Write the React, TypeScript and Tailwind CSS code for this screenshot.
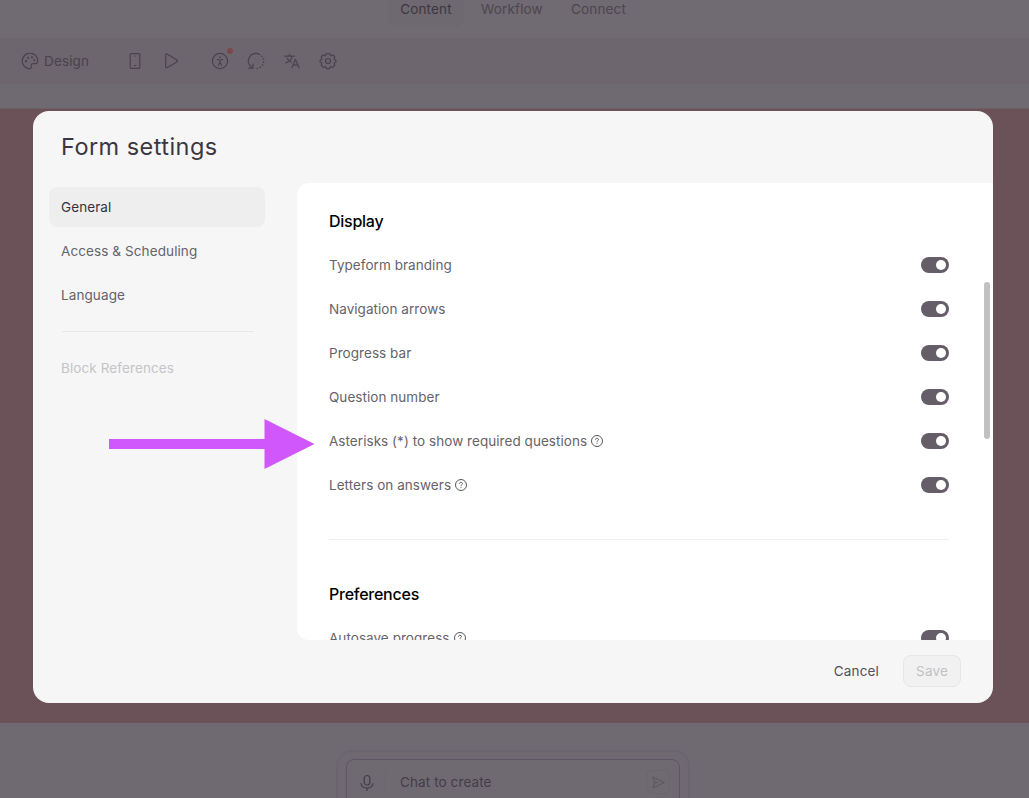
import { ReactNode } from "react";

const displayOptions = [
  { label: "Typeform branding" },
  { label: "Navigation arrows" },
  { label: "Progress bar" },
  { label: "Question number" },
  { label: "Asterisks (*) to show required questions", help: true },
  { label: "Letters on answers", help: true },
];

function Icon({ children, size = 18 }: { children: ReactNode; size?: number }) {
  return (
    <svg
      width={size}
      height={size}
      viewBox="0 0 18 18"
      fill="none"
      stroke="currentColor"
      strokeWidth="1.2"
      strokeLinecap="round"
      strokeLinejoin="round"
      className="shrink-0"
    >
      {children}
    </svg>
  );
}

function HelpIcon() {
  return (
    <svg
      width="12"
      height="12"
      viewBox="0 0 12 12"
      fill="none"
      stroke="#5a565c"
      className="shrink-0"
    >
      <circle cx="6" cy="6" r="5.5" strokeWidth="1" />
      <path
        d="M4.5 4.8C4.5 3.8 5.1 3.3 6 3.3s1.5.5 1.5 1.3c0 1-1.5 1-1.5 2.1"
        strokeWidth="1"
      />
      <path d="M6 7.8v1" strokeWidth="1" />
    </svg>
  );
}

function Toggle() {
  return (
    <div className="flex h-4 w-7 items-center justify-end rounded-full bg-[#655d67] pr-[3px]">
      <div className="h-2.5 w-2.5 rounded-full bg-white" />
    </div>
  );
}

function SettingRow({ label, help }: { label: string; help?: boolean }) {
  return (
    <div className="flex h-11 items-center justify-between">
      <div className="flex items-center gap-1">
        <span className="pb-px text-[13.5px] leading-5 tracking-[0.05px] text-[#66636a]">
          {label}
        </span>
        {help && <HelpIcon />}
      </div>
      <Toggle />
    </div>
  );
}

function Toolbar() {
  return (
    <div className="flex h-[46px] shrink-0 items-center bg-[#6d666e] pl-[21px] text-[#4a424d]">
      <div className="flex w-[105px] items-center gap-[5px]">
        <Icon>
          <path d="M9 1.2a7.8 7.8 0 0 0 0 15.6c.9 0 1.2-.6 1.2-1.3v-2c0-1.1.7-1.8 1.8-1.8h2.2c1.7 0 2.6-1.2 2.6-2.9C16.8 4.6 13.3 1.2 9 1.2Z" />
          <circle cx="5" cy="9.2" r=".5" fill="currentColor" />
          <circle cx="7" cy="5.8" r=".5" fill="currentColor" />
          <circle cx="11" cy="5.3" r=".5" fill="currentColor" />
          <circle cx="13.3" cy="8.1" r=".5" fill="currentColor" />
        </Icon>
        <span className="text-[13.5px] tracking-[0.15px]">Design</span>
      </div>
      <div className="flex items-center">
        <div className="w-9">
          <Icon>
            <rect x="4.2" y="1.6" width="9.6" height="14.8" rx="1" />
            <path d="M8.7 4h.6M8.2 13.5h1.6" />
          </Icon>
        </div>
        <div className="w-[49px]">
          <Icon>
            <path d="M3.7 2.8c0-.8.6-1.1 1.3-.8l10 6.1c.7.4.7 1.200 0 1.600l-10 6c-.7.4-1.3 0-1.3-.8Z" />
          </Icon>
        </div>
        <div className="relative w-9">
          <Icon>
            <circle cx="9" cy="9" r="7.6" />
            <circle cx="9" cy="5.2" r=".9" fill="currentColor" stroke="none" />
            <path
              d="M6.200 7.500 9 8l2.800-.5M9 8v2.200M9 10.200l-1.500 2.900M9 10.200l1.500 2.900"
              strokeWidth="1.1"
            />
          </Icon>
          <span className="absolute top-[-4px] left-[16px] h-1.5 w-1.5 rounded-full bg-[#7c484e]" />
        </div>
        <div className="w-9">
          <Icon>
            <path d="M12.7 2.4A7.6 7.6 0 0 0 5.2 15.7M1.8 16.2h4.2v-4" />
            <path
              d="M14.9 4.2A7.6 7.6 0 0 1 8 16.6"
              strokeDasharray=".2 2.9"
              strokeWidth="1.5"
            />
          </Icon>
        </div>
        <div className="w-9">
          <Icon>
            <path d="M2 4.2h9.3M6.4 2.4v1.8M9.3 4.2c-.7 3-3 5.400-6.500 6.700M4.2 6.300c.9 1.800 2.200 3 4.200 4M9 15.700l3.200-8h.4l3.400 8M10.100 13.200h4.700" />
          </Icon>
        </div>
        <Icon>
          <path d="M7.4 1.5h3.2l.6 1.7 1 .4 1.7-.7 1.9 1.900-.7 1.700.4 1 1.400.7v1.800l-1.400.7-.4 1 .7 1.700-1.900 1.900-1.700-.7-1 .4-.6 1.700H7.400l-.6-1.700-1-.4-1.700.7-1.900-1.900.7-1.700-.4-1-1.400-.7V8.200l1.400-.7.4-1-.7-1.700 1.900-1.900 1.700.7 1-.4Z" />
          <circle cx="9" cy="9" r="2.5" />
        </Icon>
      </div>
    </div>
  );
}

function EditorBackground() {
  return (
    <div className="flex h-full flex-col overflow-hidden bg-[#6f6a72]">
      <div className="flex h-[38px] shrink-0 bg-[#706a72] pl-[388px] text-[13.5px] leading-[18px] tracking-[0.15px] text-[#4c464f]">
        <div className="h-[27px] w-[76px] rounded-b-lg bg-[#6e6870] text-center text-[#3d3741]">
          Content
        </div>
        <span className="ml-[17px] w-[90px]">Workflow</span>
        <span>Connect</span>
      </div>
      <Toolbar />
      <div className="h-[25px] shrink-0 border-b border-[#6c5f66]" />
      <div className="h-[614px] shrink-0 bg-[#6b5258]" />
      <div className="flex flex-1 justify-center pt-[27px] pr-[3px]">
        <div className="h-16 w-[354px] shrink-0 rounded-2xl border-2 border-[#6b6570] px-[8px] pt-[7px]">
          <div className="flex h-16 items-start rounded-lg border border-[#5f5565] pt-[10px] pl-[11px] text-[#443d47]">
            <div className="mt-[4px]">
              <Icon>
                <rect x="6.2" y="1.5" width="5.6" height="9.5" rx="2.8" />
                <path d="M3 9.5c.5 3 2.7 4.5 6 4.500s5.500-1.500 6-4.500M9 14v2.500" />
              </Icon>
            </div>
            <div className="ml-[9px] h-6 w-px bg-[#6b656d]" />
            <span className="mt-[2px] ml-[14px] w-[246px] text-[13.5px] leading-5 tracking-[0.1px]">
              Chat to create
            </span>
            <div className="flex h-6 w-6 shrink-0 items-center justify-center rounded-md border border-[#6b656d] text-[#5b555e]">
              <Icon size={15}>
                <path d="M2.5 2.5 16 9 2.5 15.500 4.200 9ZM4.200 9H8" />
              </Icon>
            </div>
          </div>
        </div>
      </div>
    </div>
  );
}

function Sidebar() {
  return (
    <nav className="mt-1 ml-4 w-[216px] text-[13.5px] leading-5 tracking-[0.1px] text-[#66636a]">
      <div className="flex h-10 items-center rounded-lg bg-[#eeeeee] px-3 pb-px text-[#37323b]">
        General
      </div>
      <div className="mt-1 flex h-10 items-center px-3 pb-px">
        Access &amp; Scheduling
      </div>
      <div className="mt-1 flex h-10 items-center px-3 pb-px">Language</div>
      <div className="mr-[11px] ml-[13px] mt-4 h-px bg-[#e8e8e8]" />
      <div className="mt-4 flex h-10 items-center px-3 pb-px text-[#c5c4c6]">
        Block References
      </div>
    </nav>
  );
}

function SettingsDialog() {
  return (
    <div className="absolute top-[111px] left-[33px] flex h-[592px] w-[960px] flex-col overflow-hidden rounded-2xl bg-[#f6f6f6]">
      <h1 className="flex h-[72px] items-center pl-7 text-[23.5px] tracking-[0.45px] text-[#3b363f]">
        Form settings
      </h1>
      <div className="flex h-[457px] justify-between">
        <Sidebar />
        <div className="relative w-[696px] overflow-hidden rounded-l-xl bg-white pr-11 pl-8">
          <h2 className="mt-[26px] h-6 text-[16px] leading-6 font-medium tracking-[-0.25px] text-black">
            Display
          </h2>
          <div className="mt-[10px]">
            {displayOptions.map((option) => (
              <SettingRow
                key={option.label}
                label={option.label}
                help={option.help}
              />
            ))}
          </div>
          <div className="mt-8 h-px bg-[#f0f0f0]" />
          <h2 className="mt-[42px] h-6 text-[16px] leading-6 font-medium tracking-[-0.25px] text-black">
            Preferences
          </h2>
          <div className="mt-[10px]">
            <SettingRow label="Autosave progress" help />
          </div>
          <div className="absolute top-[99px] right-[3px] h-[157px] w-1.5 rounded-full bg-[#c1c1c1]" />
        </div>
      </div>
      <div className="flex flex-1 items-center justify-end gap-6 pr-8 pb-px text-[13.5px] leading-5 tracking-[0.15px]">
        <button className="text-[#554f59]">Cancel</button>
        <button className="h-8 w-[58px] rounded-lg border border-[#e6e6e6] bg-[#f1f1f1] text-[#c2c1c3]">
          Save
        </button>
      </div>
    </div>
  );
}

export default function App() {
  return (
    <div className="relative h-[798px] w-[1029px] overflow-hidden font-['Inter',sans-serif]">
      <EditorBackground />
      <SettingsDialog />
      <svg
        width="206"
        height="50"
        viewBox="0 0 206 50"
        className="absolute top-[419px] left-[109px]"
      >
        <path d="M0 20h155.5V0L205.500 25 155.500 50V30H0Z" fill="#d057fb" />
      </svg>
    </div>
  );
}
